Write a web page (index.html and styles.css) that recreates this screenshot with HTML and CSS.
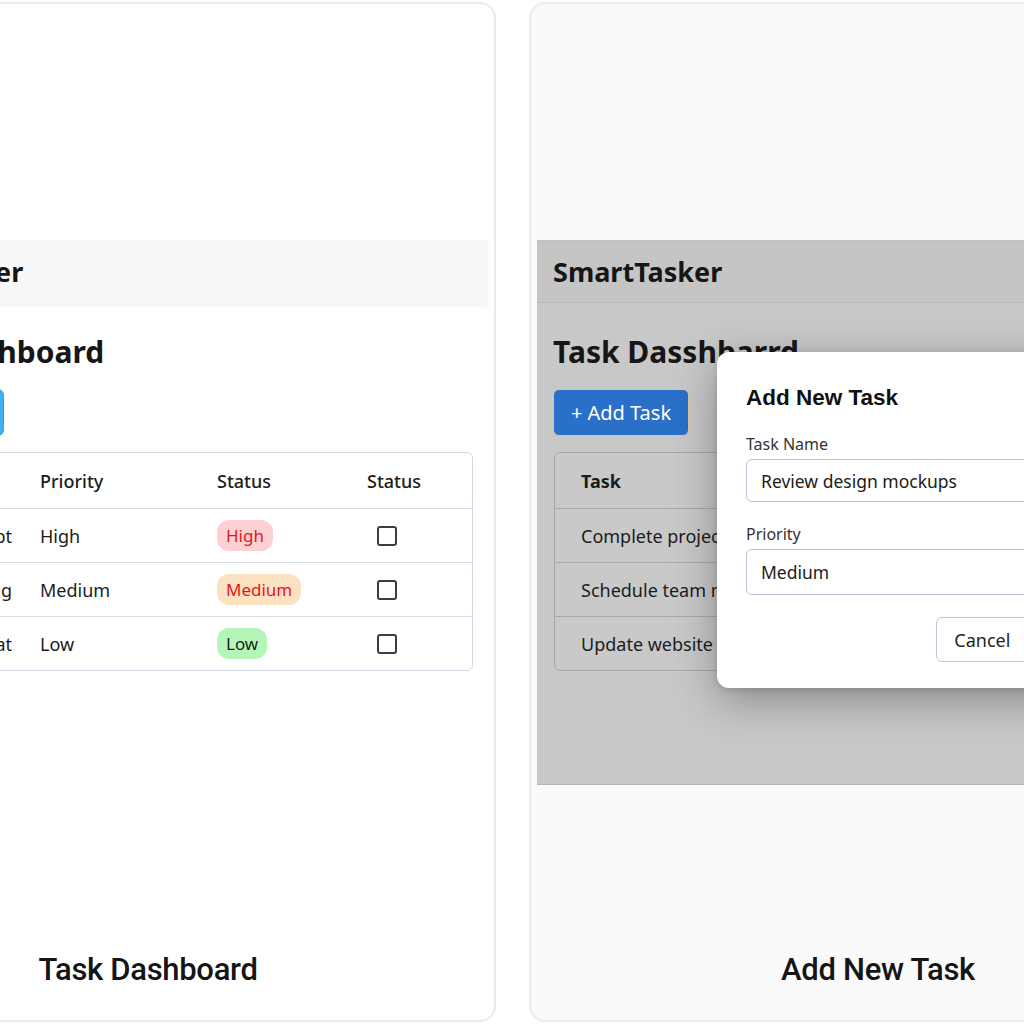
FILE: index.html
```html
<!DOCTYPE html>
<html lang="en">
<head>
<meta charset="utf-8">
<title>SmartTasker</title>
<link rel="stylesheet" href="styles.css">
</head>
<body>
<div class="stage">
  <section class="card card-left">
    <div class="app app-light">
      <header class="app-header">SmartTasker</header>
      <main class="app-body">
        <h1 class="page-title">Task Dashboard</h1>
        <button class="btn-add" type="button">+ Add Task</button>
        <div class="table">
          <div class="trow thead">
            <div class="cell c-task-head">Task</div>
            <div class="cell">Priority</div>
            <div class="cell">Status</div>
            <div class="cell">Status</div>
          </div>
          <div class="trow">
            <div class="cell c-task"><span>Complete project concept</span></div>
            <div class="cell">High</div>
            <div class="cell"><span class="badge badge-high">High</span></div>
            <div class="cell c-check"><span class="checkbox"></span></div>
          </div>
          <div class="trow">
            <div class="cell c-task"><span>Schedule team meeting</span></div>
            <div class="cell">Medium</div>
            <div class="cell"><span class="badge badge-med">Medium</span></div>
            <div class="cell c-check"><span class="checkbox"></span></div>
          </div>
          <div class="trow">
            <div class="cell c-task"><span>Update website format</span></div>
            <div class="cell">Low</div>
            <div class="cell"><span class="badge badge-low">Low</span></div>
            <div class="cell c-check"><span class="checkbox"></span></div>
          </div>
        </div>
      </main>
    </div>
    <p class="caption">Task Dashboard</p>
  </section>

  <section class="card card-right">
    <div class="app app-dim">
      <header class="app-header">SmartTasker</header>
      <main class="app-body">
        <h1 class="page-title">Task Dasshbarrd</h1>
        <button class="btn-add" type="button">+ Add Task</button>
        <div class="table">
          <div class="trow thead">
            <div class="cell">Task</div>
            <div class="cell">Priority</div>
            <div class="cell">Status</div>
          </div>
          <div class="trow"><div class="cell">Complete project</div><div class="cell">High</div><div class="cell">Open</div></div>
          <div class="trow"><div class="cell">Schedule team meeting</div><div class="cell">Medium</div><div class="cell">Open</div></div>
          <div class="trow"><div class="cell">Update website</div><div class="cell">Low</div><div class="cell">Open</div></div>
        </div>
      </main>
      <div class="modal">
        <h2 class="modal-title">Add New Task</h2>
        <label class="field-label">Task Name</label>
        <div class="field field-input">Review design mockups</div>
        <label class="field-label">Priority</label>
        <div class="field field-select">Medium</div>
        <div class="modal-actions">
          <button class="btn-cancel" type="button">Cancel</button>
          <button class="btn-save" type="button">Add</button>
        </div>
      </div>
    </div>
    <p class="caption">Add New Task</p>
  </section>
</div>
</body>
</html>
```

FILE: styles.css
```css
html, body {
  margin: 0;
  padding: 0;
}
body {
  width: 1024px;
  height: 1024px;
  overflow: hidden;
  background: #ffffff;
  font-family: "Noto Sans", "Open Sans", sans-serif;
  color: #1c1c1c;
}

.stage {
  display: flex;
  gap: 33px;
  margin-left: -200px;
  padding-top: 2px;
  width: max-content;
}

.card {
  flex-shrink: 0;
  width: 696px;
  height: 1020px;
  box-sizing: border-box;
  border: 2px solid #ebebeb;
  border-radius: 16px;
  padding: 236px 6px 0;
  display: flex;
  flex-direction: column;
  overflow: hidden;
}
.card-left { background: #ffffff; }
.card-right { background: #fafafa; width: 698px; }

.caption {
  margin: auto 0 32px;
  text-align: center;
  font-family: Roboto, "Noto Sans", sans-serif;
  font-weight: 500;
  font-size: 31px;
  line-height: 36px;
  letter-spacing: -0.3px;
  color: #151515;
}

/* app mock */
.app {
  position: relative;
  height: 545px;
  box-sizing: border-box;
}
.app-header {
  height: 63px;
  box-sizing: border-box;
  display: flex;
  align-items: center;
  font-size: 27px;
  font-weight: 700;
  color: #161616;
}
.app-body {
  padding-top: 31px;
}
.page-title {
  margin: 0;
  font-size: 30px;
  line-height: 36px;
  font-weight: 700;
  color: #161616;
}
.btn-add {
  display: block;
  margin-top: 19px;
  width: 136px;
  height: 47px;
  border-radius: 6px;
  font-family: "Noto Sans", sans-serif;
  font-size: 20px;
  color: #ffffff;
  padding: 0;
  cursor: pointer;
}

.table {
  margin-top: 16px;
  border-radius: 6px;
  overflow: hidden;
}
.trow {
  display: grid;
  height: 53px;
  align-items: center;
  font-size: 18px;
}
.trow.thead { height: 55px; }
.cell {
  white-space: nowrap;
  overflow: hidden;
}

/* light (left) */
.app-light .app-header {
  background: #f8f8f8;
  box-shadow: 0 3px 4px rgba(0, 0, 0, 0.05);
  padding-left: 46px;
}
.app-light .app-body {
  padding-left: 60px;
  padding-right: 15px;
}
.app-light .btn-add {
  background: #42aff9;
  border: 1px solid #2f9ef0;
}
.app-light .table {
  border: 1px solid #cfd8e4;
}
.app-light .trow {
  grid-template-columns: 157px 177px 150px 1fr;
}
.app-light .trow + .trow { border-top: 1px solid #d3dbe6; }
.app-light .cell { padding-left: 14px; }
.app-light .c-task {
  display: flex;
  justify-content: flex-end;
  padding: 0 14px 0 0;
  overflow: visible;
}
.app-light .c-task span { flex-shrink: 0; }
.app-light .c-check { padding-left: 24px; display: flex; }
.app-light .thead { font-weight: 500; }

.badge {
  display: inline-block;
  padding: 4px 9px;
  line-height: 23px;
  border-radius: 12px;
  font-size: 17px;
}
.badge-high { background: #fdd1d4; color: #e8141c; }
.badge-med { background: #fde2c2; color: #e8141c; }
.badge-low { background: #b4f5b8; color: #1d1d1d; }

.checkbox {
  width: 20px;
  height: 20px;
  box-sizing: border-box;
  border: 2px solid #3d3d3d;
  border-radius: 3px;
}

/* dimmed (right) */
.app-dim {
  background: #c8c8c8;
  border-top: 1px solid #c0c0c0;
  border-bottom: 1px solid #b4b4b4;
  overflow: hidden;
}
.app-dim .app-header {
  height: 62px;
  background: #c5c5c5;
  border-bottom: 1px solid #b8b8b8;
  padding-left: 16px;
}
.app-dim .app-body {
  padding-left: 16px;
  padding-right: 16px;
}
.app-dim .btn-add {
  background: #2a70c8;
  border: 1px solid #dcc6a2;
}
.app-dim .table {
  margin-left: 1px;
  border: 1px solid #a8a8a8;
  background: #c9c9c9;
}
.app-dim .trow {
  grid-template-columns: 260px 200px 1fr;
}
.app-dim .trow + .trow { border-top: 1px solid #aaaaaa; }
.app-dim .cell { padding-left: 26px; }
.app-dim .thead { font-weight: 700; }

/* modal */
.modal {
  position: absolute;
  left: 180px;
  top: 111px;
  width: 420px;
  box-sizing: border-box;
  padding: 32px 29px 26px;
  background: #ffffff;
  border-radius: 12px;
  box-shadow: 0 12px 45px rgba(0, 0, 0, 0.32), 0 2px 6px rgba(0, 0, 0, 0.12);
  display: flex;
  flex-direction: column;
}
.modal-title {
  margin: 0;
  font-family: "Liberation Sans", Arial, sans-serif;
  font-size: 22.5px;
  line-height: 28px;
  font-weight: 700;
  color: #111111;
}
.field-label {
  margin-top: 22px;
  font-size: 16px;
  line-height: 20px;
  color: #333333;
}
.field-label + .field { margin-top: 5px; }
.field {
  box-sizing: border-box;
  border: 1px solid #b8c4d4;
  border-radius: 6px;
  padding-left: 14px;
  display: flex;
  align-items: center;
  font-size: 17.5px;
  color: #1c1c1c;
}
.field-input { height: 43px; }
.field-select { height: 46px; }
.modal-actions {
  margin-top: 22px;
  display: flex;
  justify-content: flex-end;
  gap: 10px;
}
.btn-cancel, .btn-save {
  height: 45px;
  border-radius: 6px;
  font-family: "Noto Sans", sans-serif;
  font-size: 18px;
  padding: 0 17px;
}
.btn-cancel {
  background: #ffffff;
  border: 1px solid #bcc7d5;
  color: #222222;
}
.btn-save {
  background: #2f7ee0;
  border: 1px solid #2f7ee0;
  color: #ffffff;
}
```
